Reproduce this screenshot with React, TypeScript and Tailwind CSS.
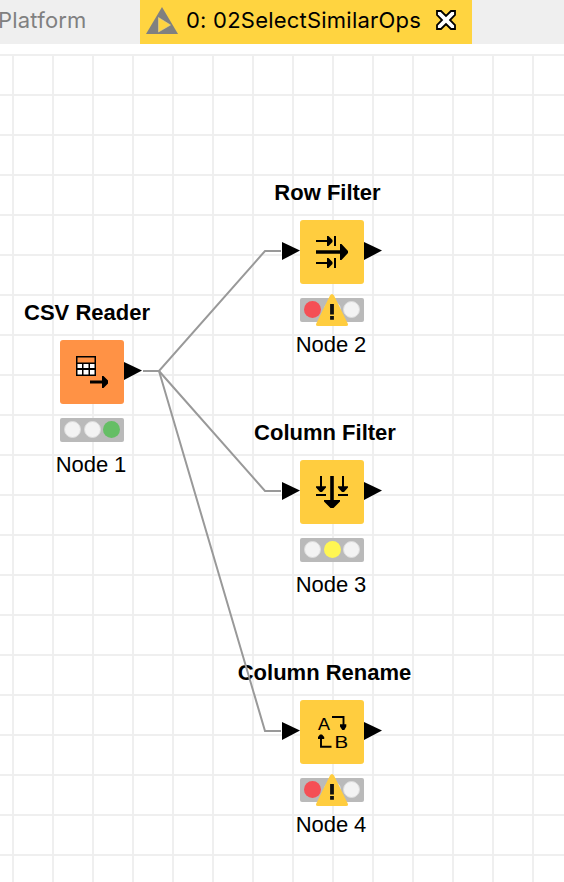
import type { ReactNode } from "react";

type Light = "red" | "yellow" | "green";

type FlowNode = {
  id: string;
  title: string;
  label: string;
  place: string;
  titleShift: string;
  color: string;
  active: Light;
  warning?: boolean;
  input?: boolean;
  icon: ReactNode;
};

const CsvIcon = (
  <>
    <path d="M16 16h20v20h-20z" fill="#000" />
    <path d="M17.5 17.5h17v5h-17z" fill="#ff9245" />
    <path
      d="M17.5 24h4.5v4h-4.5zM23.5 24h5v4h-5zM30 24h4.5v4h-4.5zM17.5 30h4.5v4.5h-4.5zM23.5 30h5v4.5h-5zM30 30h4.5v4.5h-4.5z"
      fill="#fff"
    />
    <path d="M30 40.5h12V36h1.5L48 40.5v3L43.5 48H42v-4.5H30z" fill="#000" />
  </>
);

const RowFilterIcon = (
  <>
    <path d="M16 21h13M16 43h13" stroke="#000" strokeWidth="2" />
    <path d="M27 16h1.5l4 4v2l-4 4H27zM27 38h1.5l4 4v2l-4 4H27z" />
    <path d="M34 16h2v10h-2zM34 38h2v10h-2z" />
    <path d="M16 30.3h24V24h1.5l6.5 7v2l-6.5 7H40v-6.2H16z" />
  </>
);

const ColumnFilterIcon = (
  <>
    <path d="M21 16v12M43 16v12" stroke="#000" strokeWidth="2" />
    <path d="M16 26.3h10v1.2L22 32h-2l-4-4.5zM38 26.3h10v1.2L44 32h-2l-4-4.5z" />
    <path d="M16 34h10v2H16zM38 34h10v2H38z" />
    <path d="M30.2 16h3.6v24H40v1.5L33.5 48h-3L24 41.5V40h6.2z" />
  </>
);

const ColumnRenameIcon = (
  <>
    <text x="17.6" y="30" fontSize="16.5" textLength="13" lengthAdjust="spacingAndGlyphs" fontFamily="Inter, sans-serif" fontWeight="400">
      A
    </text>
    <text x="34.2" y="47.6" fontSize="16" textLength="14" lengthAdjust="spacingAndGlyphs" fontFamily="Inter, sans-serif" fontWeight="400">
      B
    </text>
    <path d="M32 17h11.5v9M31.5 46.8H21V38" fill="none" stroke="#000" strokeWidth="1.9" />
    <path d="M40 24.2h6.3v2.3L44.3 30h-2l-2.3-3.5zM18 39v-2l2-2.5h2l2.2 2.5v2z" />
  </>
);

const nodes: FlowNode[] = [
  { id: "1", title: "CSV Reader", label: "Node 1", place: "left-[60px] top-[255px]", titleShift: "mr-[10px]", color: "bg-[#ff9245]", active: "green", icon: CsvIcon },
  { id: "2", title: "Row Filter", label: "Node 2", place: "left-[300px] top-[135px]", titleShift: "mr-[9px]", color: "bg-[#ffcd3f]", active: "red", warning: true, input: true, icon: RowFilterIcon },
  { id: "3", title: "Column Filter", label: "Node 3", place: "left-[300px] top-[375px]", titleShift: "mr-[14px]", color: "bg-[#ffcd3f]", active: "yellow", input: true, icon: ColumnFilterIcon },
  { id: "4", title: "Column Rename", label: "Node 4", place: "left-[300px] top-[615px]", titleShift: "mr-[15px]", color: "bg-[#ffcd3f]", active: "red", warning: true, input: true, icon: ColumnRenameIcon },
];

const lightFill: Record<Light, string> = {
  red: "bg-[#f54f55]",
  yellow: "bg-[#fff652]",
  green: "bg-[#65be65]",
};

function StatusLights({ active, warning }: { active: Light; warning?: boolean }) {
  return (
    <div className="relative mt-[14px] flex h-6 w-16 shrink-0 items-start gap-[2.7px] rounded-[2px] bg-[#bababa] pt-[3.2px] pl-[4px]">
      {(["red", "yellow", "green"] as Light[]).map((light) => (
        <span
          key={light}
          className={`size-[17px] rounded-full ${light === active ? lightFill[light] : "border border-[#dcdcdc] bg-[#f3f3f3]"}`}
        />
      ))}
      {warning && (
        <svg className="absolute -top-[4px] left-4 size-8" viewBox="0 0 32 32">
          <path d="M14 1.5Q16-1.5 18 1.5L31.5 29Q33 32 30 32H2Q-1 32 .5 29z" fill="#ffcd3f" />
          <path d="M14.1 10h3.8v10.6h-3.8zM14.1 22h3.8v3.8h-3.8z" fill="#111" />
        </svg>
      )}
    </div>
  );
}

function Port({ className }: { className: string }) {
  return (
    <svg className={`absolute top-[22px] h-[18px] w-[18px] ${className}`} viewBox="0 0 18 18">
      <path d="M0 0L18 8.6L0 18z" />
    </svg>
  );
}

function WorkflowNode({ node }: { node: FlowNode }) {
  return (
    <div className={`absolute flex w-16 flex-col items-center ${node.place}`}>
      <div className={`h-7 whitespace-nowrap text-[22px] leading-7 font-bold ${node.titleShift}`}>{node.title}</div>
      <div className={`relative mt-[13px] size-16 shrink-0 rounded-[3px] ${node.color}`}>
        <svg className="size-16" viewBox="0 0 64 64">
          {node.icon}
        </svg>
        {node.input && <Port className="-left-[18px]" />}
        <Port className="left-16" />
      </div>
      <StatusLights active={node.active} warning={node.warning} />
      <div className="mt-[9px] mr-[2px] h-7 whitespace-nowrap text-[22px] leading-7 tracking-[-0.1px]">{node.label}</div>
    </div>
  );
}

function TabBar() {
  return (
    <header className="flex h-11 shrink-0 bg-[#efefef] font-['Inter',sans-serif] text-[22px] leading-10">
      <div className="w-[140px] shrink-0 text-[#808080]">
        <span className="-ml-[2px] tracking-[0.2px]">Platform</span>
      </div>
      <div className="flex w-[332px] shrink-0 bg-[#ffd440] pl-[6px]">
        <svg className="mt-[7px] h-[27px] w-8 shrink-0" viewBox="0 0 32 27">
          <path d="M16 0L32 27H0z" fill="#808080" />
          <path d="M12.5 10.5L24.5 18L12.5 25z" fill="#ffd440" stroke="#ead386" strokeWidth="0.6" />
        </svg>
        <span className="ml-2 w-[250px] shrink-0 whitespace-nowrap tracking-[0.22px]">0: 02SelectSimilarOps</span>
        <svg className="mt-[10px] size-5 shrink-0" viewBox="0 0 20 20">
          <path d="M1 1h4l5 5 5-5h4v4l-5 5 5 5v4h-4l-5-5-5 5H1v-4l5-5-5-5z" fill="#fff" stroke="#000" strokeWidth="1.8" />
        </svg>
      </div>
    </header>
  );
}

export default function App() {
  return (
    <div className="flex h-[882px] w-[564px] flex-col overflow-hidden bg-white font-['Liberation_Sans',Arial,sans-serif] text-black">
      <TabBar />
      <main className="relative flex-1 pt-[10px]">
        <div className="h-full bg-[linear-gradient(#efefef_2px,transparent_2px),linear-gradient(90deg,#efefef_2px,transparent_2px)] bg-[size:40px_40px] bg-[position:0_0,12px_0]" />
        {nodes.map((node) => (
          <WorkflowNode key={node.id} node={node} />
        ))}
        <svg className="pointer-events-none absolute inset-0" width="564" height="838" viewBox="0 44 564 838">
          <g fill="none" stroke="#999" strokeWidth="2">
            <path d="M143 371H159L265 251H281" />
            <path d="M159 371L265 491H281" />
            <path d="M159 371L265 731H281" />
          </g>
        </svg>
      </main>
    </div>
  );
}
